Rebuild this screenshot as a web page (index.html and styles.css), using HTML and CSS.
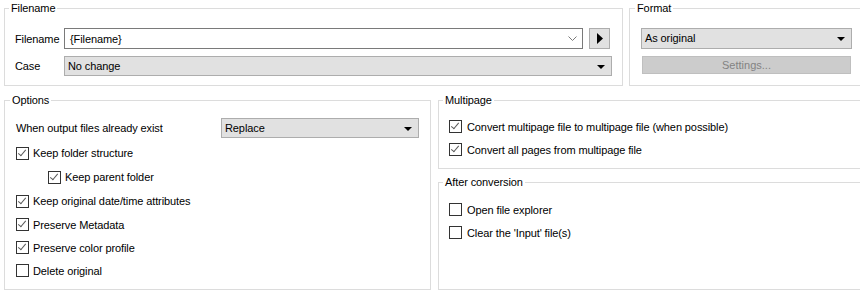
FILE: index.html
```html
<!DOCTYPE html>
<html lang="en">
  <head>
    <meta charset="UTF-8" />
    <meta name="viewport" content="width=device-width, initial-scale=1.0" />
    <title>Output Settings</title>
    <link rel="stylesheet" href="styles.css">
  </head>
  <body>
    <div class="window">
      <div class="row-top">
        <div class="group group-filename">
          <span class="group-title">Filename</span>
          <div class="field-row first">
            <span class="field-label">Filename</span>
            <div class="textbox">
              <span>{Filename}</span>
              <svg class="chevron" width="9" height="5" viewBox="0 0 9 5"><polyline points="0.5,0.5 4.5,4.5 8.5,0.5" fill="none" stroke="#7a7a7a" stroke-width="1"/></svg>
            </div>
            <button class="play-btn">
              <svg width="7" height="11" viewBox="0 0 7 11"><polygon points="0,0 6,5.5 0,11" fill="#000"/></svg>
            </button>
          </div>
          <div class="field-row">
            <span class="field-label">Case</span>
            <div class="combo combo-case">No change<span class="combo-arrow"></span></div>
          </div>
        </div>

        <div class="group group-format">
          <span class="group-title">Format</span>
          <div class="combo combo-format">As original<span class="combo-arrow"></span></div>
          <button class="settings-btn" disabled>Settings...</button>
        </div>
      </div>

      <div class="row-bottom">
        <div class="group group-options">
          <span class="group-title">Options</span>
          <div class="field-row exist-row">
            <span class="exist-label">When output files already exist</span>
            <div class="combo combo-exist">Replace<span class="combo-arrow"></span></div>
          </div>
          <label class="check-row tall"><span class="check on"></span>Keep folder structure</label>
          <label class="check-row tall indent"><span class="check on"></span>Keep parent folder</label>
          <label class="check-row tall"><span class="check on"></span>Keep original date/time attributes</label>
          <label class="check-row"><span class="check on"></span>Preserve Metadata</label>
          <label class="check-row"><span class="check on"></span>Preserve color profile</label>
          <label class="check-row"><span class="check"></span>Delete original</label>
        </div>

        <div class="right-col">
          <div class="group group-multipage">
            <span class="group-title">Multipage</span>
            <div class="check-list">
              <label class="check-row"><span class="check on"></span>Convert multipage file to multipage file (when possible)</label>
              <label class="check-row"><span class="check on"></span>Convert all pages from multipage file</label>
            </div>
          </div>
          <div class="group group-after">
            <span class="group-title">After conversion</span>
            <div class="check-list">
              <label class="check-row"><span class="check"></span>Open file explorer</label>
              <label class="check-row"><span class="check"></span>Clear the 'Input' file(s)</label>
            </div>
          </div>
        </div>
      </div>
    </div>
  </body>
</html>
```

FILE: styles.css
```css
body {
  margin: 0;
  background-color: #ffffff;
  font-family: "Liberation Sans", Arial, sans-serif;
  font-size: 11px;
  letter-spacing: -0.1px;
  color: #000000;
  overflow: hidden;
}
.window {
  width: 860px;
  height: 307px;
  padding: 8px 0 0 4px;
  box-sizing: border-box;
  overflow: hidden;
}
.row-top,
.row-bottom {
  display: flex;
  width: 1000px;
}
.row-top {
  gap: 6px;
}
.row-bottom {
  gap: 7px;
  margin-top: 14px;
}
/* group boxes */
.group {
  border: 1px solid #dcdcdc;
  box-sizing: border-box;
  padding: 0 10px;
}
.group-title {
  display: block;
  width: fit-content;
  height: 13px;
  line-height: 13px;
  margin: -7px 0 0 -6px;
  padding: 0 2px;
  background-color: #ffffff;
}
.group-filename {
  width: 619px;
  height: 78px;
}
.group-format {
  width: 250px;
  height: 78px;
  padding-left: 11px;
}
.group-options {
  width: 427px;
  height: 190px;
  padding-left: 11px;
}
.right-col {
  width: 430px;
}
.group-multipage {
  height: 69px;
}
.group-after {
  height: 108px;
  margin-top: 13px;
}
/* fields */
.field-row {
  display: flex;
  align-items: center;
  margin-top: 7px;
}
.field-row.first {
  margin-top: 13px;
}
.field-label {
  width: 49px;
}
.textbox {
  width: 519px;
  height: 21px;
  border: 1px solid #7a7a7a;
  box-sizing: border-box;
  display: flex;
  align-items: center;
  justify-content: space-between;
  padding: 0 5px 0 5px;
}
.chevron {
  display: block;
}
.play-btn {
  width: 21px;
  height: 21px;
  margin-left: 6px;
  padding: 0 0 0 2px;
  border: 1px solid #adadad;
  background-color: #e1e1e1;
  display: flex;
  align-items: center;
  justify-content: center;
}
.combo {
  position: relative;
  height: 20px;
  line-height: 18px;
  border: 1px solid #adadad;
  background-color: #e1e1e1;
  box-sizing: border-box;
  padding-left: 3px;
}
.combo-arrow {
  position: absolute;
  right: 6px;
  top: 8px;
  width: 0;
  height: 0;
  border-left: 4px solid transparent;
  border-right: 4px solid transparent;
  border-top: 4px solid #000000;
}
.combo-case {
  width: 548px;
}
.combo-format {
  width: 211px;
  height: 21px;
  line-height: 19px;
  margin-top: 13px;
}
.combo-exist {
  width: 198px;
}
.settings-btn {
  display: block;
  width: 209px;
  height: 18px;
  margin: 7px 0 0 1px;
  padding: 0;
  border: 1px solid #bfbfbf;
  background-color: #cccccc;
  color: #838383;
  font-family: inherit;
  font-size: 11px;
}
.exist-row {
  margin-top: 11px;
}
.exist-label {
  width: 205px;
}
/* checkboxes */
.check-row {
  display: flex;
  align-items: center;
  height: 23px;
}
.check-row.tall {
  height: 24px;
}
.exist-row + .check-row {
  margin-top: 3px;
}
.check-row.indent {
  padding-left: 32px;
}
.check {
  position: relative;
  width: 13px;
  height: 13px;
  border: 1px solid #333333;
  box-sizing: border-box;
  margin-right: 4px;
  background-color: #ffffff;
}
.check.on::after {
  content: "";
  position: absolute;
  left: 3px;
  top: 0px;
  width: 3px;
  height: 7px;
  border-right: 1px solid #5a5a5a;
  border-bottom: 1px solid #5a5a5a;
  transform: rotate(40deg);
}
.check-list {
  margin-top: 8px;
}
.group-after .check-list {
  margin-top: 9px;
}
.check-list .check {
  margin-right: 5px;
}
```
